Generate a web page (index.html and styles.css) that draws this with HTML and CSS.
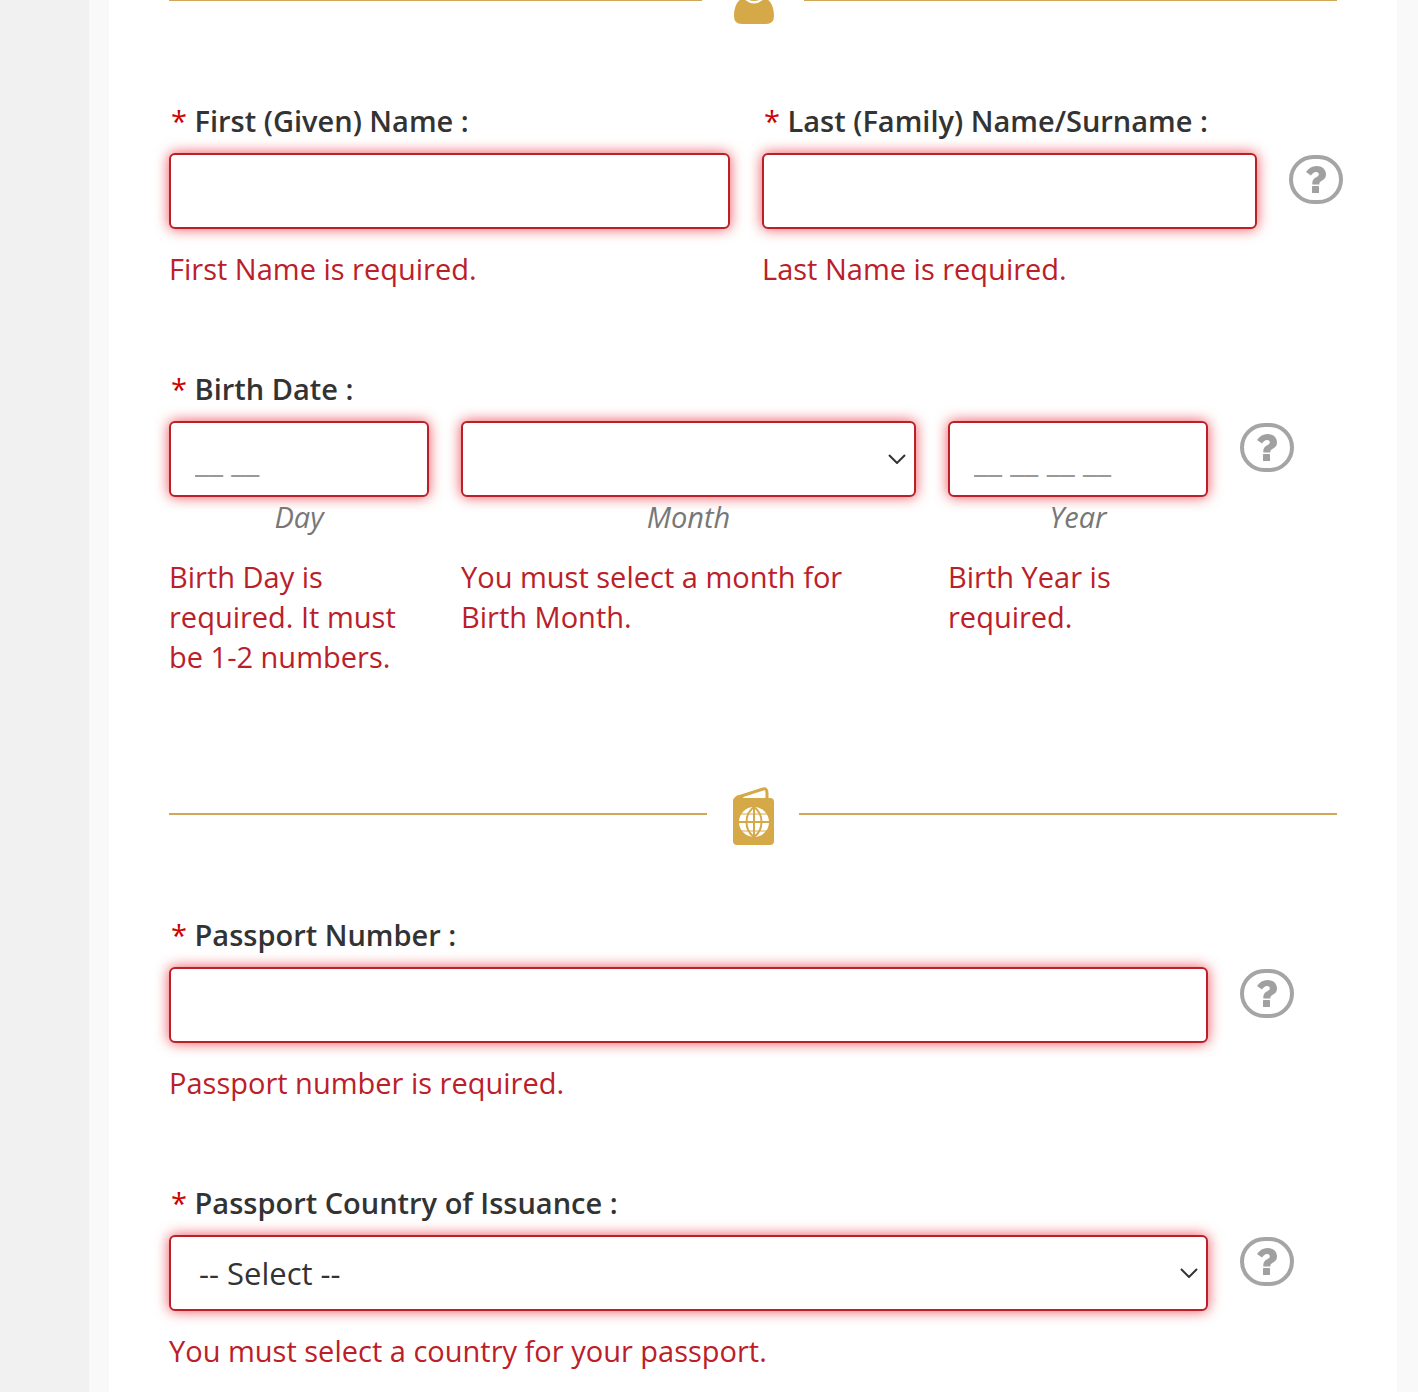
FILE: index.html
```html
<!DOCTYPE html>
<html lang="en">
<head>
<meta charset="utf-8">
<meta name="viewport" content="width=device-width, initial-scale=1">
<title>Passport Details</title>
<link rel="stylesheet" href="styles.css">
</head>
<body>
<svg class="sprite" aria-hidden="true">
  <symbol id="question" viewBox="0 0 20 27">
    <path d="M0 6Q4 0 10.500 0C16 0 20 3.500 20 8.200C20 11.500 18.500 13.200 15.800 14.800C14 16 13.300 16.600 13.300 18.500H6.300V17.500C6.300 14.500 7.300 12.800 9.800 11.400C11.800 10.300 12.800 9.600 12.800 8.200C12.800 6.800 11.600 6 10 6C8 6 6.600 7.300 5 9.500Z"/>
    <rect x="6" y="20" width="7" height="7" rx="0.500"/>
  </symbol>
  <symbol id="chevron" viewBox="0 0 18 10"><path d="M1 1L9 9L17 1"/></symbol>
</svg>
<main class="page">
<form class="form" novalidate>
  <div class="divider divider-person">
    <svg class="divider-icon" viewBox="0 0 42 52" width="42" height="52" aria-hidden="true">
      <circle cx="22" cy="14" r="13"/>
      <path d="M11 24C4 27 2 35 2 42Q2 50 10 50H34Q42 50 42 42C42 35 40 27 33 24Q22 35 11 24Z"/>
    </svg>
  </div>

  <div class="row row-name">
    <div class="field">
      <label class="label" for="first"><span class="req">* </span>First (Given) Name :</label>
      <input class="control" id="first" type="text">
      <p class="error">First Name is required.</p>
    </div>
    <div class="field">
      <label class="label" for="last"><span class="req">* </span>Last (Family) Name/Surname :</label>
      <input class="control" id="last" type="text">
      <p class="error">Last Name is required.</p>
    </div>
    <button class="help" type="button" aria-label="Help with name"><svg width="20" height="27"><use href="#question"/></svg></button>
  </div>

  <fieldset class="group">
    <legend class="label"><span class="req">* </span>Birth Date :</legend>
    <div class="row row-date">
      <div class="field">
        <input class="control" id="day" type="text" placeholder="__ __">
        <label class="hint" for="day">Day</label>
        <p class="error">Birth Day is required. It must be 1-2 numbers.</p>
      </div>
      <div class="field">
        <div class="select">
          <select class="control" id="month"><option></option><option>January</option><option>February</option></select>
          <svg class="chevron" width="18" height="10" aria-hidden="true"><use href="#chevron"/></svg>
        </div>
        <label class="hint" for="month">Month</label>
        <p class="error">You must select a month for Birth Month.</p>
      </div>
      <div class="field">
        <input class="control" id="year" type="text" placeholder="__ __ __ __">
        <label class="hint" for="year">Year</label>
        <p class="error">Birth Year is required.</p>
      </div>
      <button class="help help-inline" type="button" aria-label="Help with birth date"><svg width="20" height="27"><use href="#question"/></svg></button>
    </div>
  </fieldset>

  <div class="divider">
    <svg class="divider-icon" viewBox="0 0 42 64" width="42" height="64" aria-hidden="true">
      <path class="cover" d="M2 19L6 15L31 7Q35 6 35 11V18"/>
      <path d="M1 20Q1 14 8 13L14 12L10 17Z"/>
      <rect x="1" y="16" width="41" height="47" rx="4"/>
      <circle class="globe" cx="22" cy="40" r="15"/>
      <path class="grid" d="M22 24V56M6 40H38M22 25C12 32 12 48 22 55M22 25C32 32 32 48 22 55"/>
      <path class="grid grid-fine" d="M9 32H35M9 49H35"/>
    </svg>
  </div>

  <div class="row row-single">
    <div class="field">
      <label class="label" for="number"><span class="req">* </span>Passport Number :</label>
      <input class="control" id="number" type="text">
      <p class="error">Passport number is required.</p>
    </div>
    <button class="help" type="button" aria-label="Help with passport number"><svg width="20" height="27"><use href="#question"/></svg></button>
  </div>

  <div class="row row-single">
    <div class="field">
      <label class="label" for="country"><span class="req">* </span>Passport Country of Issuance :</label>
      <div class="select">
        <select class="control" id="country"><option>-- Select --</option><option>Canada</option><option>France</option></select>
        <svg class="chevron" width="18" height="10" aria-hidden="true"><use href="#chevron"/></svg>
      </div>
      <p class="error">You must select a country for your passport.</p>
    </div>
    <button class="help" type="button" aria-label="Help with country of issuance"><svg width="20" height="27"><use href="#question"/></svg></button>
  </div>
</form>
</main>
</body>
</html>
```
FILE: styles.css
```css
* { box-sizing: border-box; }

body {
  margin: 0;
  background: #f1f1f1;
  color: #333;
  font: 29px/40px "Open Sans", "Noto Sans", sans-serif;
}

.sprite { display: none; }

.page {
  margin-left: 89px;
  padding: 0 21px 0 20px;
  background: #f9f9f9;
}

.form {
  min-height: 100vh;
  padding: 0 60px 20px;
  background: #fff;
  overflow: hidden;
}

.row,
.group { margin-bottom: 80px; }

.divider {
  display: flex;
  align-items: center;
  gap: 25px;
  margin: 105px 0 69px;
}

.divider::before,
.divider::after {
  content: "";
  flex: 1;
  height: 2px;
  background: #d0a75a;
}

.divider-person {
  gap: 30px;
  margin: -26px 0 75px;
}

.divider-icon {
  fill: #d5a948;
}

.cover {
  fill: none;
  stroke: #d5a948;
  stroke-width: 3;
}

.globe { fill: #fff; }

.grid {
  fill: none;
  stroke: #d5a948;
  stroke-width: 2;
}

.grid-fine { stroke-width: 1; }

.row {
  display: grid;
  align-items: start;
  column-gap: 32px;
}

.row:last-child { margin-bottom: 0; }

.row-name {
  grid-template-columns: 561fr 495fr 54px;
  margin-right: -6px;
}

.row-date {
  grid-template-columns: 260fr 455fr 260fr 54px;
  margin-right: 43px;
}

.row-single {
  grid-template-columns: 1fr 54px;
  margin-right: 43px;
}

.field { min-width: 0; }

.group {
  min-width: 0;
  margin-inline: 0;
  padding: 0;
  border: 0;
}

.label {
  display: block;
  margin-bottom: 12px;
  padding: 0 2px;
  font-weight: 600;
}

.req {
  color: #c00;
  font-weight: 400;
}

.control {
  display: block;
  width: 100%;
  height: 76px;
  padding: 0 24px;
  border: 2px solid #bb2029;
  border-radius: 6px;
  background: #fff;
  box-shadow: 0 0 14px #e60012b0;
  color: #333;
  font: 32px "Open Sans", "Noto Sans", sans-serif;
  appearance: none;
}

.control::placeholder {
  color: #999;
  opacity: 1;
}

.select {
  display: grid;
  align-items: center;
}

.select > * { grid-area: 1 / 1; }

.select .control {
  padding: 0 28px;
  font-size: 31px;
}

.chevron {
  justify-self: end;
  margin-right: 10px;
  fill: none;
  stroke: #333;
  stroke-width: 2;
  pointer-events: none;
}

.hint {
  display: block;
  color: #777;
  font-style: italic;
  text-align: center;
}

.error {
  margin: 20px 0 0;
  padding-right: 16px;
  color: #bb2029;
}

.help {
  display: flex;
  align-items: center;
  justify-content: center;
  width: 54px;
  height: 49px;
  margin-top: 54px;
  padding: 0;
  border: 4px solid #a5a5a5;
  border-radius: 25px;
  background: none;
  fill: #a0a0a0;
}

.help-inline { margin-top: 2px; }
```
